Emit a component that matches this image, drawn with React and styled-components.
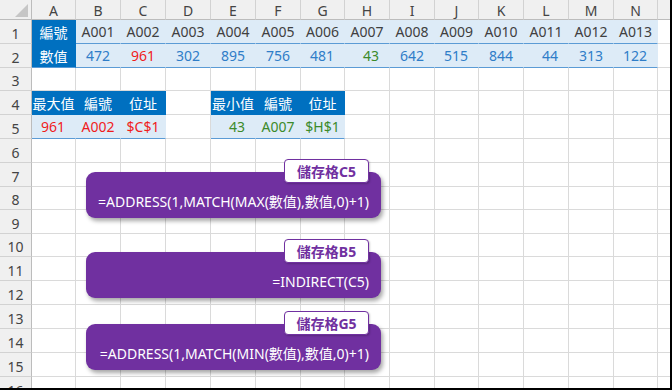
import React from "react";
import styled, { createGlobalStyle, css } from "styled-components";

const Global = createGlobalStyle`
  html, body { margin: 0; padding: 0; background: #fff; }
  body { width: 672px; height: 390px; overflow: hidden; }
`;

const FONT = `"Noto Sans", "Noto Sans CJK TC", sans-serif`;

const COLS = [44, 45, 45, 45, 45, 45, 44, 45, 45, 44, 45, 45, 45, 44];
const ROWS = [24, 24, 23, 24, 24, 24, 24, 23, 24, 23, 24, 24, 24, 24, 24];
const LETTERS = "ABCDEFGHIJKLMNO".split("");

const C = {
  dark: "#0070c0",
  light: "#ddebf7",
  line: "#5b9bd5",
  grid: "#dadada",
  num: "#2f7dc8",
  text: "#404040",
  red: "#f01c1c",
  green: "#3b8a2a",
  purple: "#7030a0",
};

const Frame = styled.div`
  position: relative;
  width: 672px;
  height: 390px;
  box-sizing: border-box;
  border-right: 2px solid #000;
  border-bottom: 2px solid #000;
  overflow: hidden;
  font-family: ${FONT};
  background: #fff;
`;

const Sheet = styled.div`
  display: grid;
  grid-template-columns: 32px ${COLS.map((c) => c + "px").join(" ")} 45px;
  grid-template-rows: 20px ${ROWS.map((r) => r + "px").join(" ")} 24px;
`;

const base = css`
  box-sizing: border-box;
  display: flex;
  align-items: center;
  font-size: 14px;
  white-space: nowrap;
  overflow: hidden;
`;

const Corner = styled.div`
  ${base};
  position: relative;
  background: #f0f0f0;
  border-right: 1px solid #bcbcbc;
  border-bottom: 1px solid #bcbcbc;
  &::after {
    content: "";
    position: absolute;
    right: 3px;
    bottom: 2px;
    width: 13px;
    height: 13px;
    background: #c6c6c6;
    clip-path: polygon(100% 0, 100% 100%, 0 100%);
  }
`;

const ColHead = styled.div`
  ${base};
  justify-content: center;
  background: #f0f0f0;
  color: #444;
  border-right: 1px solid #d2d2d2;
  border-bottom: 1px solid #bcbcbc;
  padding-top: 1px;
`;

const RowHead = styled.div`
  ${base};
  justify-content: center;
  background: #f0f0f0;
  color: #444;
  border-right: 1px solid #bcbcbc;
  border-bottom: 1px solid #d2d2d2;
  padding-top: 3px;
`;

const fills = {
  none: css`
    background: #fff;
    border-right: 1px solid ${C.grid};
    border-bottom: 1px solid ${C.grid};
  `,
  dark: css`
    background: ${C.dark};
    color: #fff;
    border-right: 1px solid ${C.dark};
    border-bottom: 1px solid ${C.dark};
  `,
  light: css`
    background: ${C.light};
    border-right: 1px solid ${C.light};
    border-bottom: 1px solid ${C.light};
  `,
};

const Cell = styled.div`
  ${base};
  ${(p) => fills[p.$fill || "none"]};
  justify-content: ${(p) => (p.$align === "right" ? "flex-end" : "center")};
  padding-right: ${(p) => (p.$align === "right" ? "10px" : "0")};
  color: ${(p) => (p.$tone ? C[p.$tone] : p.$fill === "dark" ? "#fff" : C.text)};
  ${(p) =>
    p.$line &&
    css`
      border-bottom: 1px solid ${C.line};
    `}
`;

const Callout = styled.div`
  position: absolute;
  left: 86px;
  top: ${(p) => p.$top}px;
  width: 295px;
  height: 46px;
  box-sizing: border-box;
  background: ${C.purple};
  border-radius: 9px;
  box-shadow: 2px 3px 4px rgba(0, 0, 0, 0.35);
  display: flex;
  align-items: flex-end;
  justify-content: flex-end;
  padding: 0 12px 8px;
  color: #fff;
  font-size: 14px;
  line-height: 17px;
  white-space: nowrap;
`;

const Tag = styled.div`
  position: absolute;
  left: 284px;
  top: ${(p) => p.$top}px;
  width: 85px;
  height: 24px;
  box-sizing: border-box;
  background: #fff;
  border: 1px solid ${C.purple};
  border-radius: 4px;
  color: ${C.purple};
  font-weight: 700;
  font-size: 14px;
  display: flex;
  align-items: center;
  justify-content: center;
  box-shadow: 1px 1px 2px rgba(0, 0, 0, 0.2);
`;

const codes = Array.from({ length: 13 }, (_, i) => "A" + String(i + 1).padStart(3, "0"));
const values = [472, 961, 302, 895, 756, 481, 43, 642, 515, 844, 44, 313, 122];

function cellFor(r, c) {
  // r: 1-based row, c: 0-based column index (0 = A)
  if (r === 1) {
    if (c === 0) return { text: "編號", $fill: "dark" };
    if (c <= 13) return { text: codes[c - 1], $fill: "light", $line: true };
  }
  if (r === 2) {
    if (c === 0) return { text: "數值", $fill: "dark", $line: true };
    if (c <= 13) {
      const v = values[c - 1];
      const tone = v === 961 ? "red" : v === 43 ? "green" : "num";
      return { text: String(v), $fill: "light", $line: true, $align: "right", $tone: tone };
    }
  }
  if (r === 4) {
    const h = { 0: "最大值", 1: "編號", 2: "位址", 4: "最小值", 5: "編號", 6: "位址" };
    if (h[c]) return { text: h[c], $fill: "dark" };
  }
  if (r === 5) {
    const d = {
      0: { text: "961", $align: "right", $tone: "red" },
      1: { text: "A002", $tone: "red" },
      2: { text: "$C$1", $tone: "red" },
      4: { text: "43", $align: "right", $tone: "green" },
      5: { text: "A007", $tone: "green" },
      6: { text: "$H$1", $tone: "green" },
    };
    if (d[c]) return { ...d[c], $fill: "light", $line: true };
  }
  return { text: "" };
}

const callouts = [
  { top: 172, tagTop: 159, tag: "儲存格C5", formula: "=ADDRESS(1,MATCH(MAX(數值),數值,0)+1)" },
  { top: 252, tagTop: 239, tag: "儲存格B5", formula: "=INDIRECT(C5)" },
  { top: 324, tagTop: 311, tag: "儲存格G5", formula: "=ADDRESS(1,MATCH(MIN(數值),數值,0)+1)" },
];

export default function App() {
  const rowCount = ROWS.length + 1;
  return (
    <Frame>
      <Global />
      <Sheet>
        <Corner />
        {LETTERS.map((l) => (
          <ColHead key={l}>{l}</ColHead>
        ))}
        {Array.from({ length: rowCount }, (_, i) => {
          const r = i + 1;
          return (
            <React.Fragment key={r}>
              <RowHead>{r}</RowHead>
              {LETTERS.map((l, c) => {
                const { text, ...rest } = cellFor(r, c);
                return (
                  <Cell key={l} {...rest}>
                    {text}
                  </Cell>
                );
              })}
            </React.Fragment>
          );
        })}
      </Sheet>
      {callouts.map((co) => (
        <React.Fragment key={co.tag}>
          <Callout $top={co.top}>{co.formula}</Callout>
          <Tag $top={co.tagTop}>{co.tag}</Tag>
        </React.Fragment>
      ))}
    </Frame>
  );
}
